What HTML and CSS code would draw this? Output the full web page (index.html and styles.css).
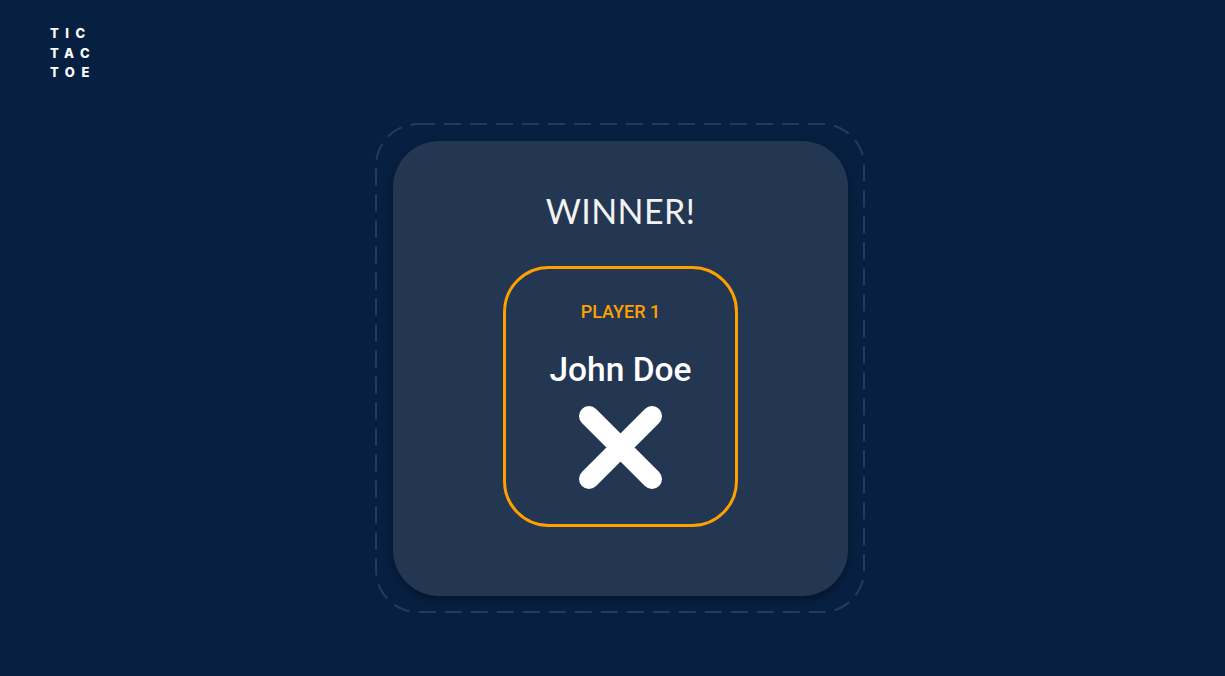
FILE: index.html
```html
<!DOCTYPE html>
<html>
<head>
<meta charset="utf-8">
<link rel="stylesheet" href="styles.css">
</head>
<body>
<header class="logo">
  <span>TIC</span>
  <span>TAC</span>
  <span>TOE</span>
</header>
<main class="stage">
  <div class="frame">
    <svg class="dash" width="490" height="490" viewBox="0 0 490 490">
      <rect x="1" y="1" width="488" height="488" rx="42" ry="42" fill="none" stroke="#233c5e" stroke-width="2" stroke-dasharray="17 9"/>
    </svg>
    <section class="card">
      <h1 class="title">WINNER!</h1>
      <div class="player">
        <div class="player-label">PLAYER 1</div>
        <div class="player-name">John Doe</div>
        <svg class="mark" width="84" height="84" viewBox="0 0 84 84">
          <path d="M10 10 L73 73 M73 10 L10 73" stroke="#fff" stroke-width="20" stroke-linecap="round" fill="none"/>
        </svg>
      </div>
    </section>
  </div>
</main>
</body>
</html>
```
FILE: styles.css
```css
* { box-sizing: border-box; }
html, body { margin: 0; padding: 0; }
body {
  width: 1225px;
  height: 676px;
  background: #072041;
  font-family: Roboto, "Liberation Sans", sans-serif;
  color: #fff;
  overflow: hidden;
}
.logo {
  display: flex;
  flex-direction: column;
  padding: 24px 0 0 50px;
  font-family: Inter, "Liberation Sans", sans-serif;
  font-weight: 800;
  font-size: 13px;
  letter-spacing: 6.5px;
  line-height: 19.5px;
}
.stage {
  display: flex;
  justify-content: center;
  padding-top: 40px;
  padding-left: 15px;
}
.frame {
  position: relative;
  width: 490px;
  height: 490px;
  padding: 18px;
}
.dash {
  position: absolute;
  left: 0;
  top: 0;
}
.card {
  position: relative;
  width: 455px;
  height: 455px;
  background: #233652;
  border-radius: 46px;
  box-shadow: 0 4px 10px rgba(0,0,0,0.35);
  display: flex;
  flex-direction: column;
  align-items: center;
  padding-top: 50px;
}
.title {
  margin: 0;
  font-family: Lato, "Open Sans", sans-serif;
  font-weight: 400;
  font-size: 34px;
  line-height: 40px;
  letter-spacing: 0.4px;
  color: #f2f2f2;
}
.player {
  margin-top: 35px;
  width: 235px;
  height: 261px;
  border: 3px solid #ffa000;
  border-radius: 46px;
  display: flex;
  flex-direction: column;
  align-items: center;
  padding-top: 33px;
}
.player-label {
  color: #ffa000;
  font-weight: 500;
  font-size: 18px;
  line-height: 20px;
}
.player-name {
  margin-top: 30px;
  font-weight: 500;
  font-size: 33.5px;
  line-height: 36px;
}
.mark {
  margin-top: 18px;
}
```
